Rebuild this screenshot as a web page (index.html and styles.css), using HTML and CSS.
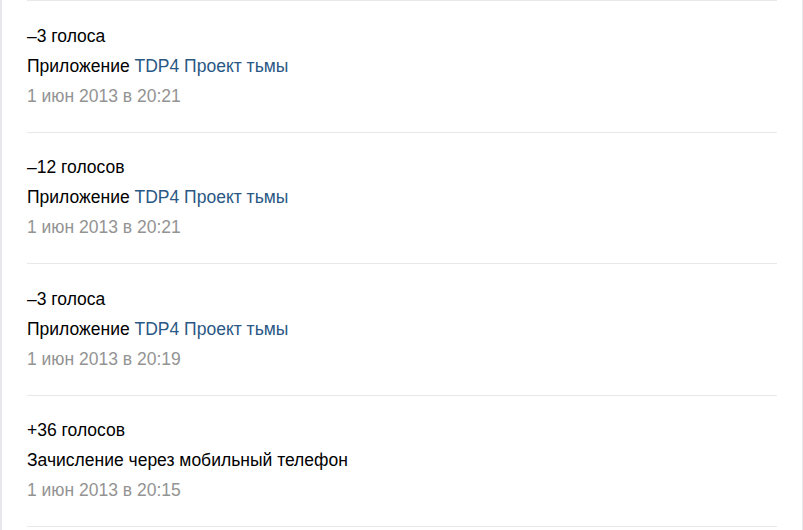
FILE: index.html
```html
<!DOCTYPE html>
<html lang="ru">
<head>
<meta charset="utf-8">
<link rel="stylesheet" href="styles.css">
</head>
<body>
<div class="panel">
  <ul class="list">
    <li class="item">
      <div class="votes">–3 голоса</div>
      <div class="desc">Приложение <a class="link" href="#">TDP4 Проект тьмы</a></div>
      <div class="date">1 июн 2013 в 20:21</div>
    </li>
    <li class="item">
      <div class="votes">–12 голосов</div>
      <div class="desc">Приложение <a class="link" href="#">TDP4 Проект тьмы</a></div>
      <div class="date">1 июн 2013 в 20:21</div>
    </li>
    <li class="item">
      <div class="votes">–3 голоса</div>
      <div class="desc">Приложение <a class="link" href="#">TDP4 Проект тьмы</a></div>
      <div class="date">1 июн 2013 в 20:19</div>
    </li>
    <li class="item">
      <div class="votes">+36 голосов</div>
      <div class="desc">Зачисление через мобильный телефон</div>
      <div class="date">1 июн 2013 в 20:15</div>
    </li>
    <li class="item item-last"></li>
  </ul>
</div>
</body>
</html>
```
FILE: styles.css
```css
html, body {
  margin: 0;
  padding: 0;
  background: #ffffff;
}
body {
  font-family: "Liberation Sans", Arial, sans-serif;
  font-size: 17.5px;
  color: #000000;
}
.panel {
  width: 803px;
  height: 530px;
  border-left: 2px solid #e7e8ec;
  border-right: 1px solid #e7e8ec;
  background: #ffffff;
  padding: 0 25px;
  box-sizing: border-box;
  overflow: hidden;
}
.list {
  list-style: none;
  margin: 0;
  padding: 0;
}
.item {
  border-top: 1px solid #e7e8ec;
  padding: 19.5px 0 21px;
  line-height: 30px;
}
.item-last {
  padding: 0;
  height: 10px;
}
.link {
  color: #2a5885;
  text-decoration: none;
}
.date {
  color: #939393;
}
```
